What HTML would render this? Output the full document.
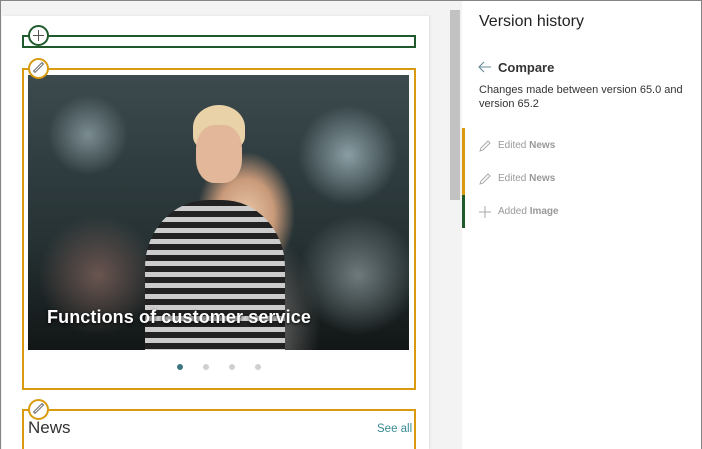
<!DOCTYPE html>
<html style="width:702px;height:449px;overflow:hidden"><head><style>
*{margin:0;padding:0;box-sizing:border-box}
body{width:702px;height:449px;overflow:hidden;font-family:"Liberation Sans",sans-serif;background:#fff;position:relative}
.a{position:absolute}
</style></head><body>
<div class="a" style="left:1px;top:1px;width:461px;height:448px;background:#f3f3f3"></div>
<div class="a" style="left:2px;top:16px;width:427px;height:433px;background:#fff;box-shadow:1px 0 2px #ddd"></div>
<div class="a" style="left:450px;top:10px;width:10px;height:190px;background:#c2c2c2"></div>
<div class="a" style="left:0;top:0;width:702px;height:449px;border:1px solid #858585;border-bottom:none"></div>
<!-- green section -->
<div class="a" style="left:22px;top:35px;width:394px;height:13px;border:2px solid #1f5a2c"></div>
<div class="a" style="left:28px;top:25px;width:21px;height:21px;border:2px solid #1f5a2c;border-radius:50%;background:#fff"></div>
<div class="a" style="left:33px;top:35px;width:11px;height:1px;background:#555"></div>
<div class="a" style="left:38px;top:30px;width:1px;height:11px;background:#555"></div>
<!-- orange section -->
<div class="a" style="left:22px;top:68px;width:394px;height:322px;border:2px solid #d99a10"></div>
<div class="a" style="left:28px;top:75px;width:381px;height:275px;background:
radial-gradient(ellipse 70px 90px at 218px 140px,#e8c7a8 0,#c99a7a 40%,transparent 70%),
radial-gradient(ellipse 110px 140px at 210px 250px,#3a3a3a 0,#555 40%,transparent 75%),
radial-gradient(circle at 60px 60px,#7b8c90 0,transparent 40px),
radial-gradient(circle at 320px 80px,#8a9ea3 0,transparent 50px),
radial-gradient(circle at 330px 200px,#6e7a7c 0,transparent 60px),
radial-gradient(circle at 70px 200px,#6a5550 0,transparent 60px),
linear-gradient(180deg,#3c4a4e 0,#263234 60%,#121616 100%)"></div>
<div class="a" style="left:193px;top:105px;width:52px;height:45px;border-radius:50% 50% 30% 30%;background:#e9d2a8"></div>
<div class="a" style="left:196px;top:125px;width:46px;height:58px;border-radius:40%;background:#e3b89a"></div>
<div class="a" style="left:145px;top:200px;width:140px;height:150px;border-radius:45% 45% 0 0;background:repeating-linear-gradient(180deg,#222 0 6px,#ccc 6px 11px)"></div>
<div class="a" style="left:47px;top:307px;color:#fff;font-weight:bold;font-size:18px;letter-spacing:0.1px;text-shadow:0 1px 3px #000">Functions of customer service</div>
<div class="a" style="left:28px;top:58px;width:21px;height:21px;border:2px solid #d99a10;border-radius:50%;background:#fff"></div>
<div class="a" style="left:37px;top:61px;width:3px;height:13px;border:1px solid #666;transform:rotate(45deg)"></div>
<div class="a" style="left:177px;top:364px;width:6px;height:6px;border-radius:50%;background:#3f7580"></div>
<div class="a" style="left:203px;top:364px;width:6px;height:6px;border-radius:50%;background:#d0d0d0"></div>
<div class="a" style="left:229px;top:364px;width:6px;height:6px;border-radius:50%;background:#d0d0d0"></div>
<div class="a" style="left:255px;top:364px;width:6px;height:6px;border-radius:50%;background:#d0d0d0"></div>
<!-- news -->
<div class="a" style="left:22px;top:409px;width:394px;height:40px;border:2px solid #d99a10;border-bottom:none"></div>
<div class="a" style="left:28px;top:399px;width:21px;height:21px;border:2px solid #d99a10;border-radius:50%;background:#fff"></div>
<div class="a" style="left:37px;top:402px;width:3px;height:13px;border:1px solid #666;transform:rotate(45deg)"></div>
<div class="a" style="left:28px;top:418px;font-size:17px;color:#333">News</div>
<div class="a" style="left:377px;top:423px;font-size:11.5px;color:#3a8a94">See all</div>
<!-- right panel -->
<div class="a" style="left:479px;top:13px;font-size:16px;color:#222">Version history</div>
<svg class="a" style="left:477px;top:60px" width="16" height="14"><path d="M14 7H2M7 2L2 7l5 5" stroke="#6a8a9a" stroke-width="1.1" fill="none"/></svg>
<div class="a" style="left:498px;top:60px;font-size:13px;font-weight:bold;color:#333">Compare</div>
<div class="a" style="left:479px;top:83px;width:215px;font-size:11px;line-height:14px;color:#333">Changes made between version 65.0 and version 65.2</div>
<div class="a" style="left:462px;top:128px;width:3px;height:67px;background:#d99a10"></div>
<div class="a" style="left:462px;top:195px;width:3px;height:33px;background:#1f5a2c"></div>
<svg class="a" style="left:478px;top:139px" width="14" height="14"><path d="M2 12l1-3 7-7 2 2-7 7z" stroke="#aaa" fill="none"/></svg>
<div class="a" style="left:498px;top:140px;font-size:10px;color:#999">Edited <b>News</b></div>
<svg class="a" style="left:478px;top:172px" width="14" height="14"><path d="M2 12l1-3 7-7 2 2-7 7z" stroke="#aaa" fill="none"/></svg>
<div class="a" style="left:498px;top:173px;font-size:10px;color:#999">Edited <b>News</b></div>
<svg class="a" style="left:478px;top:205px" width="14" height="14"><path d="M7 1v12M1 7h12" stroke="#aaa" fill="none"/></svg>
<div class="a" style="left:498px;top:206px;font-size:10px;color:#999">Added <b>Image</b></div>
</body></html>
